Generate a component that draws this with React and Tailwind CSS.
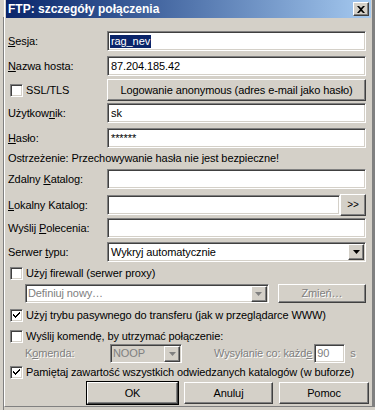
import React from 'react';

const sunken =
  'bg-white border border-t-[#808080] border-l-[#808080] border-b-white border-r-white shadow-[inset_1px_1px_0_#404040,inset_-1px_-1px_0_#d4d0c8]';
const raised =
  'bg-[#d4d0c8] border border-t-white border-l-white border-b-[#404040] border-r-[#404040] shadow-[inset_-1px_-1px_0_#808080,inset_1px_1px_0_#d4d0c8]';

const Check = ({ checked }) => (
  <span className={`w-[13px] h-[13px] shrink-0 flex items-center justify-center ${sunken}`}>
    {checked && (
      <svg width="7" height="7" viewBox="0 0 7 7">
        <path d="M0 2h1v1h1v1h1V3h1V2h1V1h1V0h1v2H6v1H5v1H4v1H3v1H2V5H1V4H0z" fill="#000" />
      </svg>
    )}
  </span>
);

const Arrow = ({ disabled }) => (
  <span className={`w-[16px] h-[16px] shrink-0 flex items-center justify-center ${raised}`}>
    <svg width="7" height="4" viewBox="0 0 7 4">
      <path d="M0 0h7L3.5 4z" fill={disabled ? '#808080' : '#000'} />
    </svg>
  </span>
);

const Field = ({ label, children }) => (
  <div className="flex items-center h-[20px]">
    <span className="w-[99px] shrink-0">{label}</span>
    {children}
  </div>
);

export default function App() {
  return (
    <div className="w-[375px] h-[410px] bg-[#d4d0c8] flex overflow-hidden font-['Liberation_Sans',Arial,sans-serif] text-[11px] tracking-[-0.1px] text-black leading-none">
      {/* bits of the window behind */}
      <div className="w-[4px] shrink-0 flex flex-col">
        <div className="h-[17px]" />
        <div className="flex-1 border-r border-[#808080]" />
      </div>

      <div className="w-[371px] h-[407px] flex flex-col border-l border-white border-r-[3px] border-r-[#808080] border-b border-b-[#808080] pl-[1px] pr-[1px]">
        {/* title bar */}
        <div className="h-[18px] shrink-0 flex items-center justify-between pl-[2px] pr-[2px] bg-gradient-to-r from-[#0a246a] to-[#a6caf0]">
          <span className="text-white font-bold text-[12px] tracking-normal">FTP: szczegóły połączenia</span>
          <span className={`w-[16px] h-[14px] flex items-center justify-center ${raised}`}>
            <svg width="8" height="7" viewBox="0 0 8 7">
              <path d="M0 0h2l2 2 2-2h2L5 3.5 8 7H6L4 5 2 7H0l3-3.5z" fill="#000" />
            </svg>
          </span>
        </div>

        <div className="flex flex-col pl-[2px] pr-[5px]">
          <div className="mt-[13px]">
            <Field label={<><u>S</u>esja:</>}>
              <div className={`flex-1 h-[20px] flex items-center px-[2px] ${sunken}`}>
                <span className="bg-[#0a246a] text-white px-[1px] h-[13px] flex items-center">rag_nev</span>
              </div>
            </Field>
          </div>

          <div className="mt-[5px]">
            <Field label={<><u>N</u>azwa hosta:</>}>
              <div className={`flex-1 h-[20px] flex items-center px-[3px] ${sunken}`}>87.204.185.42</div>
            </Field>
          </div>

          <div className="mt-[3px] flex items-center h-[22px]">
            <div className="w-[99px] shrink-0 flex items-center gap-[3px] pl-[2px]">
              <Check />
              <span>SSL/TLS</span>
            </div>
            <button className={`flex-1 h-[22px] flex items-center justify-center ${raised}`}>
              Logowanie anonymous (adres e-mail jako hasło)
            </button>
          </div>

          <div className="mt-[2px]">
            <Field label={<>Użytkow<u>n</u>ik:</>}>
              <div className={`flex-1 h-[20px] flex items-center px-[3px] ${sunken}`}>sk</div>
            </Field>
          </div>

          <div className="mt-[5px]">
            <Field label={<><u>H</u>asło:</>}>
              <div className={`flex-1 h-[20px] flex items-center px-[3px] ${sunken}`}>******</div>
            </Field>
          </div>

          <div className="h-[21px] flex items-center">Ostrzeżenie: Przechowywanie hasła nie jest bezpieczne!</div>

          <Field label={<>Zdalny <u>K</u>atalog:</>}>
            <div className={`flex-1 h-[20px] ${sunken}`} />
          </Field>

          <div className="mt-[5px] flex items-center h-[22px]">
            <span className="w-[99px] shrink-0"><u>L</u>okalny Katalog:</span>
            <div className={`flex-1 h-[20px] ${sunken}`} />
            <button className={`w-[26px] h-[22px] flex items-center justify-center text-[10px] ${raised}`}>&gt;&gt;</button>
          </div>

          <div className="mt-[2px]">
            <Field label={<>Wyślij <u>P</u>olecenia:</>}>
              <div className={`flex-1 h-[20px] ${sunken}`} />
            </Field>
          </div>

          <div className="mt-[4px]">
            <Field label={<>Serwer <u>t</u>ypu:</>}>
              <div className={`flex-1 h-[20px] flex items-center justify-between pl-[3px] pr-[1px] ${sunken}`}>
                <span>Wykryj automatycznie</span>
                <Arrow />
              </div>
            </Field>
          </div>

          <div className="mt-[4px] h-[14px] flex items-center gap-[3px] pl-[2px]">
            <Check />
            <span>Użyj firewall (serwer proxy)</span>
          </div>

          <div className="mt-[4px] flex items-center h-[19px]">
            <div className={`ml-[17px] w-[246px] h-[19px] flex items-center justify-between pl-[2px] pr-[1px] ${sunken}`}>
              <span className="text-[#808080]">Definiuj nowy…</span>
              <Arrow disabled />
            </div>
            <button className={`ml-[9px] w-[89px] h-[19px] flex items-center justify-center text-[#808080] [text-shadow:1px_1px_0_#fff] ${raised}`}>Zmień…</button>
          </div>

          <div className="mt-[5px] h-[14px] flex items-center gap-[3px] pl-[2px]">
            <Check checked />
            <span>Użyj trybu pasywnego do transferu (jak w przeglądarce WWW)</span>
          </div>

          <div className="mt-[7px] h-[14px] flex items-center gap-[3px] pl-[2px]">
            <Check />
            <span>Wyślij komendę, by utrzymać połączenie:</span>
          </div>

          <div className="mt-[1px] flex items-center h-[19px] text-[#808080] [text-shadow:1px_1px_0_#fff]">
            <span className="ml-[17px] w-[85px]">K<u>o</u>menda:</span>
            <div className={`w-[72px] h-[19px] flex items-center justify-between pl-[2px] pr-[1px] [text-shadow:none] ${sunken} !bg-[#d4d0c8]`}>
              <span>NOOP</span>
              <Arrow disabled />
            </div>
            <span className="ml-[32px]">Wysyłanie co: każd<u>e</u></span>
            <div className={`ml-[2px] w-[31px] h-[19px] flex items-center px-[2px] [text-shadow:none] ${sunken}`}>90</div>
            <span className="ml-[5px]">s</span>
          </div>

          <div className="mt-[2px] h-[14px] flex items-center gap-[3px] pl-[2px]">
            <Check checked />
            <span>Pamiętaj zawartość wszystkich odwiedzanych katalogów (w buforze)</span>
          </div>

          <div className="mt-[3px] flex items-center justify-end gap-[6px] -mr-[3px]">
            <button className={`w-[91px] h-[22px] flex items-center justify-center outline outline-1 outline-black ${raised}`}>OK</button>
            <button className={`w-[89px] h-[22px] flex items-center justify-center ${raised}`}>Anuluj</button>
            <button className={`w-[90px] h-[22px] flex items-center justify-center ${raised}`}>Pomoc</button>
          </div>
        </div>
      </div>
    </div>
  );
}
